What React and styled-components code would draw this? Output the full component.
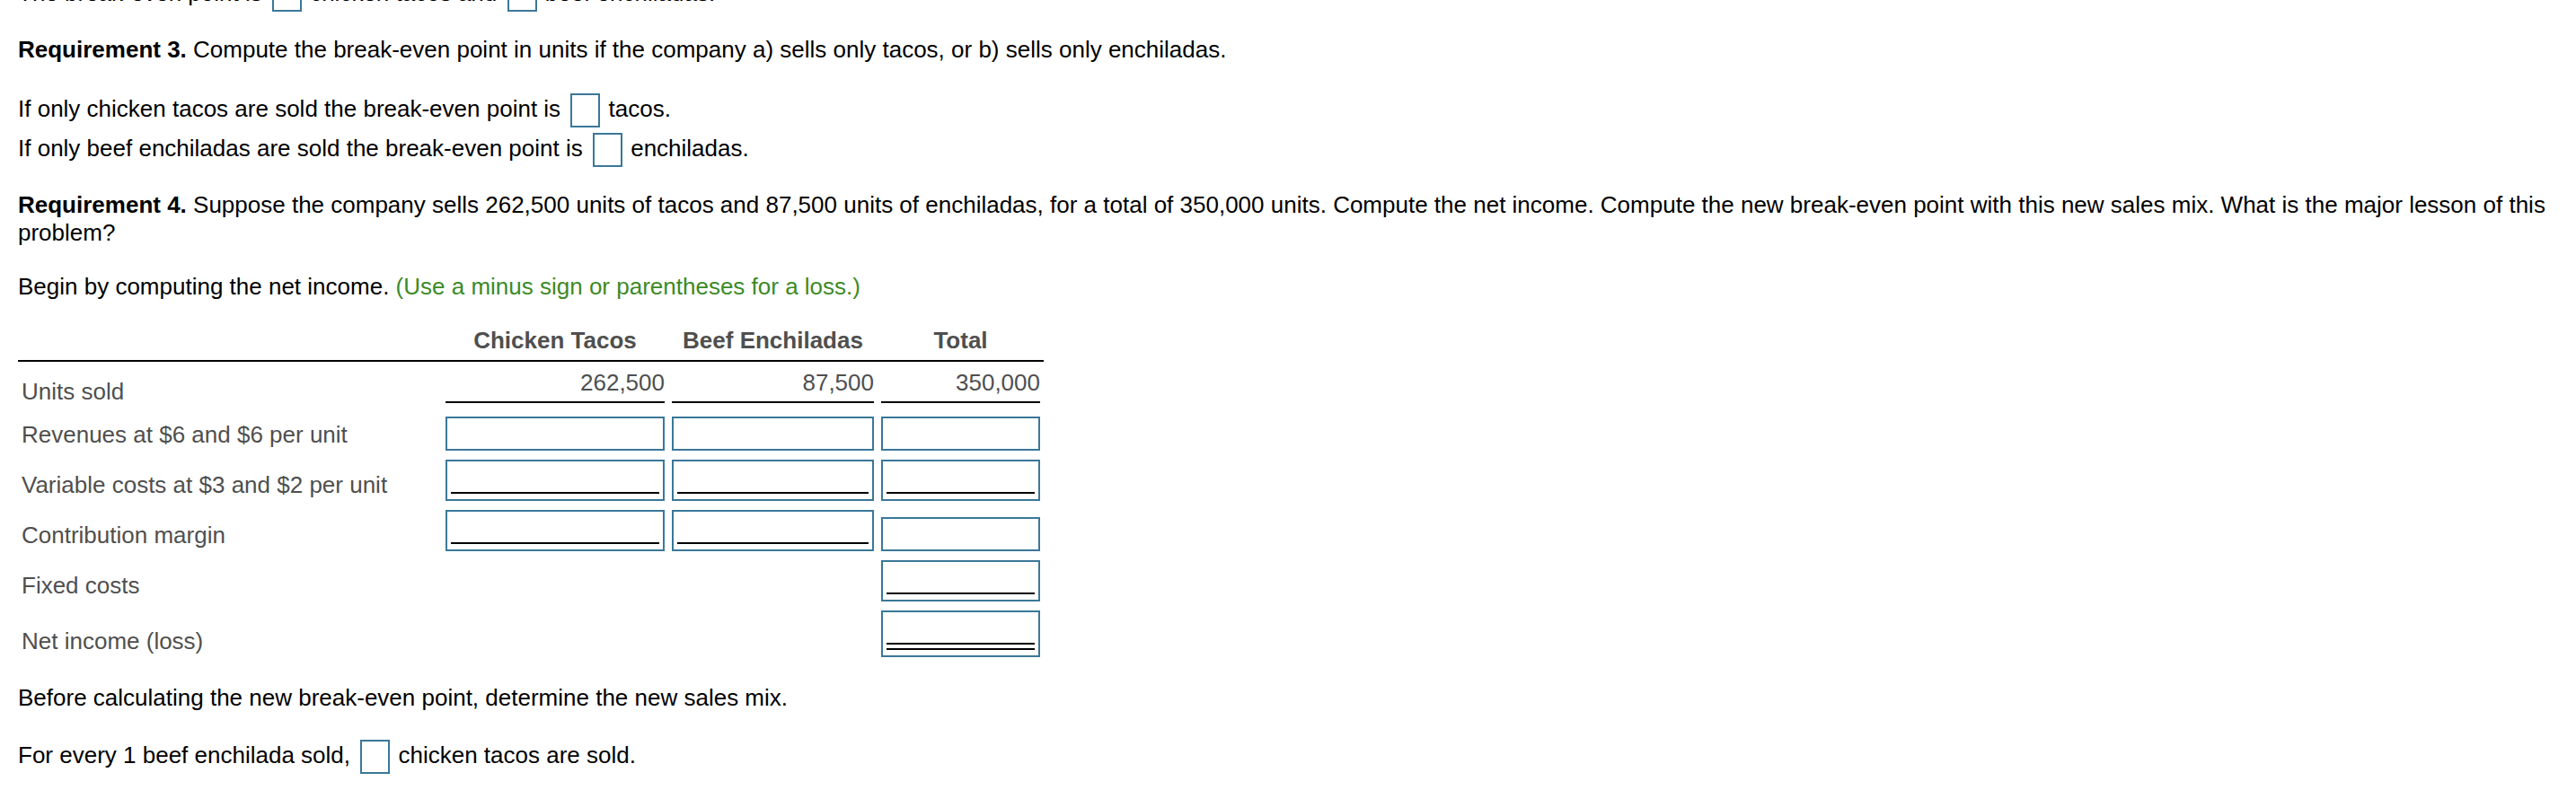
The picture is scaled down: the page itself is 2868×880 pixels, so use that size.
import styled, { createGlobalStyle } from 'styled-components';

const GlobalStyle = createGlobalStyle`
  html, body {
    margin: 0;
    background: #fff;
  }
  body {
    font-family: "Liberation Sans", Arial, Helvetica, sans-serif;
    font-size: 26px;
    color: #000;
  }
`;

const Page = styled.main`
  padding: 0 20px;
`;

const Para = styled.div`
  margin-top: ${(props) => props.$top || 0}px;
  line-height: 31px;
`;

const Line = styled.div`
  white-space: nowrap;
`;

const Lead = styled.strong`
  font-weight: bold;
`;

const Hint = styled.span`
  color: #3c8a26;
`;

const Blank = styled.span`
  display: inline-block;
  box-sizing: border-box;
  width: 33px;
  height: 38px;
  border: 2px solid #3a7899;
  vertical-align: middle;
  margin: 3px 2px 3px 4px;
`;

const Sheet = styled.table`
  margin-top: 23px;
  border-collapse: separate;
  border-spacing: 0;
  table-layout: fixed;
  width: 1142px;
  font-family: "Liberation Sans", Arial, Helvetica, sans-serif;
  font-size: 26px;
  line-height: normal;
  color: #4f4f4f;
`;

const Col = styled.col`
  width: ${(props) => props.$w}px;
`;

const HeadCell = styled.th`
  padding: 6px 4px 6px;
  border-bottom: 2px solid #000;
  font-weight: bold;
  text-align: center;
  white-space: nowrap;
`;

const LabelCell = styled.td`
  padding: 0 4px 7px 4px;
  vertical-align: bottom;
  text-align: left;
  white-space: nowrap;
`;

const GivenCell = styled.td`
  padding: 8px 4px 10px;
  vertical-align: bottom;
`;

const Given = styled.div`
  text-align: right;
  padding-bottom: 5px;
  border-bottom: 2px solid #000;
`;

const AmountCell = styled.td`
  padding: 5px 4px;
  vertical-align: bottom;
`;

const Field = styled.div`
  box-sizing: border-box;
  border: 2px solid #3a7899;
  background: #fff;
`;

const Slot = styled.div`
  height: 34px;
`;

const Rule = styled.div`
  height: 2px;
  background: #000;
  margin: 0 4px ${(props) => (props.$double ? 12 : 6)}px;
  box-shadow: ${(props) => (props.$double ? '0 6px 0 #000' : 'none')};
`;

const units = ['262,500', '87,500', '350,000'];

const rows = [
  { label: 'Revenues at $6 and $6 per unit', fields: ['none', 'none', 'none'] },
  { label: 'Variable costs at $3 and $2 per unit', fields: ['single', 'single', 'single'] },
  { label: 'Contribution margin', fields: ['single', 'single', 'none'] },
  { label: 'Fixed costs', fields: [null, null, 'single'] },
  { label: 'Net income (loss)', fields: [null, null, 'double'] },
];

function Input({ rule }) {
  return (
    <Field>
      <Slot />
      {rule !== 'none' && <Rule $double={rule === 'double'} />}
    </Field>
  );
}

function IncomeSheet() {
  return (
    <Sheet>
      <colgroup>
        <Col $w={472} />
        <Col $w={252} />
        <Col $w={233} />
        <Col $w={185} />
      </colgroup>
      <thead>
        <tr>
          <HeadCell />
          <HeadCell>Chicken Tacos</HeadCell>
          <HeadCell>Beef Enchiladas</HeadCell>
          <HeadCell>Total</HeadCell>
        </tr>
      </thead>
      <tbody>
        <tr>
          <LabelCell>Units sold</LabelCell>
          {units.map((u) => (
            <GivenCell key={u}>
              <Given>{u}</Given>
            </GivenCell>
          ))}
        </tr>
        {rows.map((row) => (
          <tr key={row.label}>
            <LabelCell>{row.label}</LabelCell>
            {row.fields.map((f, i) => (
              <AmountCell key={i}>{f && <Input rule={f} />}</AmountCell>
            ))}
          </tr>
        ))}
      </tbody>
    </Sheet>
  );
}

export default function App() {
  return (
    <>
      <GlobalStyle />
      <Page>
        <Para $top={-28}>
          <Line>
            The break-even point is <Blank /> chicken tacos and <Blank /> beef enchiladas.
          </Line>
        </Para>
        <Para $top={24}>
          <Lead>Requirement 3.</Lead> Compute the break-even point in units if the company a) sells
          only tacos, or b) sells only enchiladas.
        </Para>
        <Para $top={30}>
          <Line>
            If only chicken tacos are sold the break-even point is <Blank /> tacos.
          </Line>
          <Line>
            If only beef enchiladas are sold the break-even point is <Blank /> enchiladas.
          </Line>
        </Para>
        <Para $top={24}>
          <Lead>Requirement 4.</Lead> Suppose the company sells 262,500 units of tacos and 87,500
          units of enchiladas, for a total of 350,000 units. Compute the net income. Compute the new
          break-even point with this new sales mix. What is the major lesson of this problem?
        </Para>
        <Para $top={29}>
          Begin by computing the net income. <Hint>(Use a minus sign or parentheses for a loss.)</Hint>
        </Para>
        <IncomeSheet />
        <Para $top={25}>Before calculating the new break-even point, determine the new sales mix.</Para>
        <Para $top={28}>
          <Line>
            For every 1 beef enchilada sold, <Blank /> chicken tacos are sold.
          </Line>
        </Para>
      </Page>
    </>
  );
}
